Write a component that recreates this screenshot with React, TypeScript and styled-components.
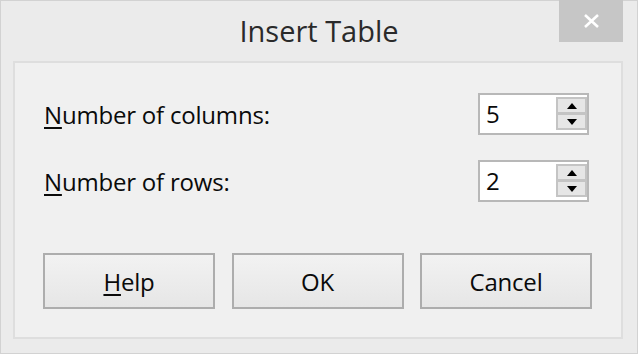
import React from "react";
import styled, { createGlobalStyle } from "styled-components";

const Global = createGlobalStyle`
  html, body { margin: 0; padding: 0; background: #ebebeb; }
  body { width: 638px; height: 354px; overflow: hidden; }
  * { box-sizing: border-box; }
`;

const Window = styled.div`
  width: 638px;
  height: 354px;
  background: #ebebeb;
  border: 1px solid #d2d2d2;
  display: flex;
  flex-direction: column;
  font-family: "Open Sans", "Noto Sans", sans-serif;
  color: #0a0a0a;
`;

const TitleBar = styled.div`
  height: 60px;
  display: grid;
  grid-template-columns: 1fr auto 1fr;
  align-items: start;
`;

const Title = styled.div`
  grid-column: 2;
  font-size: 29px;
  line-height: 60px;
  color: #2a2a2a;
  letter-spacing: 0;
`;

const CloseButton = styled.div`
  grid-column: 3;
  justify-self: end;
  margin-right: 14px;
  margin-top: -1px;
  width: 64px;
  height: 42px;
  background: #c6c6c6;
  display: flex;
  align-items: center;
  justify-content: center;
`;

const Panel = styled.div`
  flex: 1;
  margin: 0 14px 14px 12px;
  background: #f0f0f0;
  border: 2px solid #dedede;
  padding: 30px 32px 28px 29px;
  display: flex;
  flex-direction: column;
`;

const Row = styled.div<{ $gap?: number }>`
  display: flex;
  align-items: center;
  justify-content: space-between;
  margin-bottom: ${(p) => p.$gap ?? 0}px;
`;

const Label = styled.span`
  font-size: 24px;
  letter-spacing: -0.2px;
`;

const Key = styled.span`
  text-decoration: underline;
  text-decoration-thickness: 2px;
  text-underline-offset: 3px;
`;

const SpinBox = styled.div`
  width: 111px;
  height: 42px;
  border: 2px solid #b8b8b8;
  background: #fff;
  display: flex;
  align-items: stretch;
  padding: 2px 0 3px 0;
`;

const SpinValue = styled.div`
  flex: 1;
  font-size: 24px;
  line-height: 33px;
  padding-left: 6px;
`;

const SpinButtons = styled.div`
  width: 31px;
  display: flex;
  flex-direction: column;
  background: #d6d6d6;
`;

const SpinButton = styled.div`
  flex: 1;
  background: #e6e6e6;
  border: 2px solid #c4c4c4;
  display: flex;
  align-items: center;
  justify-content: center;
  & + & { border-top-width: 1px; }
`;

const Buttons = styled.div`
  margin-top: auto;
  display: flex;
  justify-content: space-between;
  margin-left: -1px;
  margin-right: -3px;
`;

const Button = styled.div`
  width: 172px;
  height: 56px;
  border: 2px solid #adadad;
  background: linear-gradient(#f2f2f2, #e6e6e6);
  font-size: 24px;
  letter-spacing: -0.2px;
  display: flex;
  align-items: center;
  justify-content: center;
`;

const Arrow = ({ down }: { down?: boolean }) => (
  <svg width="10" height="6" viewBox="0 0 10 6">
    <polygon points={down ? "0,0 10,0 5,6" : "5,0 10,6 0,6"} fill="#000" />
  </svg>
);

const Spinner = ({ value }: { value: string }) => (
  <SpinBox>
    <SpinValue>{value}</SpinValue>
    <SpinButtons>
      <SpinButton>
        <Arrow />
      </SpinButton>
      <SpinButton>
        <Arrow down />
      </SpinButton>
    </SpinButtons>
  </SpinBox>
);

export default function App() {
  return (
    <>
      <Global />
      <Window>
        <TitleBar>
          <Title>Insert Table</Title>
          <CloseButton>
            <svg width="17" height="14" viewBox="0 0 17 14">
              <path d="M2 1 L15 13 M15 1 L2 13" stroke="#fff" strokeWidth="2.6" />
            </svg>
          </CloseButton>
        </TitleBar>
        <Panel>
          <Row $gap={25}>
            <Label>
              <Key>N</Key>umber of columns:
            </Label>
            <Spinner value="5" />
          </Row>
          <Row>
            <Label>
              <Key>N</Key>umber of rows:
            </Label>
            <Spinner value="2" />
          </Row>
          <Buttons>
            <Button>
              <span>
                <Key>H</Key>elp
              </span>
            </Button>
            <Button>OK</Button>
            <Button>Cancel</Button>
          </Buttons>
        </Panel>
      </Window>
    </>
  );
}
